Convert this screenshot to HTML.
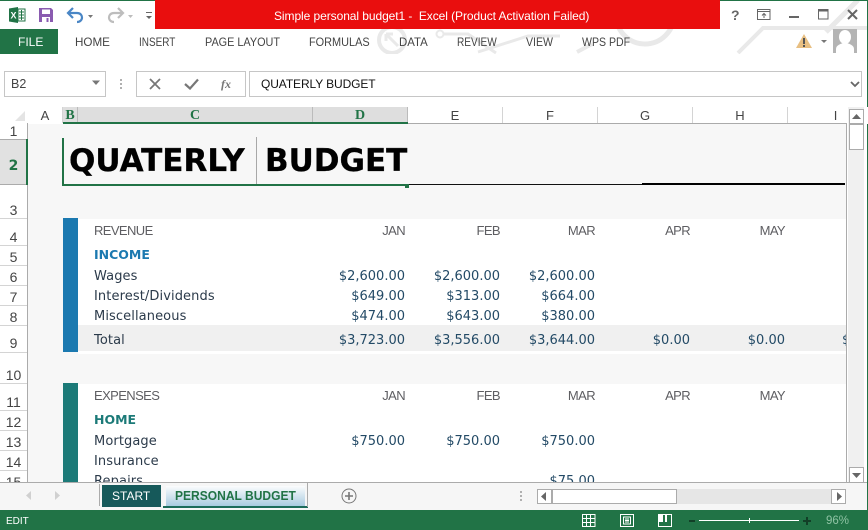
<!DOCTYPE html>
<html><head><meta charset="utf-8"><style>
html,body{margin:0;padding:0;background:#fff}
#p{position:relative;width:868px;height:530px;overflow:hidden;background:#fff;font-family:"Liberation Sans",sans-serif}
#p div{position:absolute;box-sizing:border-box}
.t{white-space:nowrap;line-height:16px;height:16px}
.rb{font-size:12px;color:#444;top:34px;transform-origin:0 50%}
.ch{top:107px;height:16px;font:13px/17px "Liberation Sans",sans-serif;color:#444;text-align:center;border-right:1px solid #d4d4d4}
.cs{font:bold 14px/17px "Liberation Serif",serif;color:#217346;border-color:#bbb}
.rn{left:0;width:27px;text-align:center;font:14px/16px "Liberation Sans",sans-serif;color:#444;height:16px}
.rl{left:0;width:27px;height:1px;background:#d4d4d4}
.h{font:13px/16px "Liberation Sans",sans-serif;letter-spacing:-.6px;color:#5e5e62;text-align:right;width:70px;height:16px;white-space:nowrap}
.l{left:94px;font:13px/16px "DejaVu Sans",sans-serif;letter-spacing:.1px;color:#2b3a4a;white-space:nowrap;height:16px}
.n{font:13px/16px "DejaVu Sans",sans-serif;color:#234a66;text-align:right;width:90px;height:16px;white-space:nowrap}
.sb{background:#fff;border:1px solid #ababab}
.ti{font:bold 31px/36px "DejaVu Sans",sans-serif;color:#000;white-space:pre;height:36px;-webkit-text-stroke:.3px #000}
</style></head><body><div id="p">

<svg style="position:absolute;left:0;top:0" width="868" height="54" viewBox="0 0 868 54" fill="none" stroke="#e9e9e9" stroke-width="4">
<circle cx="392" cy="40" r="13"/><path d="M386 34L398 46M386 34H393M386 34V41" stroke-width="3"/>
<circle cx="440" cy="34" r="3.500" stroke-width="2"/><path d="M444 34H468L496 53" stroke-width="3"/>
<path d="M478 52L528 36H560" stroke-width="3"/><circle cx="645" cy="15" r="29" stroke-width="5"/>
<path d="M577 52L592 44" stroke-width="4"/>
<path d="M738 53L763 28H868" stroke-width="4"/><path d="M826 32L858 0" stroke-width="5"/>
</svg>

<div style="left:0;top:0;width:868px;height:1px;background:#217346"></div>
<div style="left:867px;top:0;width:1px;height:510px;background:#217346"></div>

<svg style="position:absolute;left:8px;top:6px" width="18" height="18" viewBox="0 0 18 18"><path d="M1 2.500L10 1V17L1 15.500Z" fill="#217346"/><path d="M10 3H17V15H10Z" fill="#fff" stroke="#217346"/><path d="M11 6H16M11 9H16M11 12H16M13.500 4V14" stroke="#217346"/><text x="2.500" y="12.500" font-family="Liberation Sans" font-weight="bold" font-size="9" fill="#fff">X</text></svg>
<svg style="position:absolute;left:38px;top:7px" width="16" height="16" viewBox="0 0 16 16"><path d="M1 1H13L15 3V15H1Z" fill="#8a5bb0"/><rect x="4" y="2.500" width="8" height="4.500" fill="#fff"/><rect x="4" y="10" width="8" height="5" fill="#fff"/><rect x="8.500" y="11" width="2" height="4" fill="#8a5bb0"/></svg>
<svg style="position:absolute;left:66px;top:6px" width="30" height="18" viewBox="0 0 30 18" fill="none"><path d="M3 7H11C15 7 16 10 16 11.500C16 14 14 16 11 16" stroke="#4a86c5" stroke-width="2.200"/><path d="M7 2L2 7L7 12" stroke="#4a86c5" stroke-width="2.200"/><path d="M22 9H27L24.500 12Z" fill="#777"/></svg>
<svg style="position:absolute;left:106px;top:6px" width="30" height="18" viewBox="0 0 30 18" fill="none"><path d="M16 7H8C4 7 3 10 3 11.500C3 14 5 16 8 16" stroke="#bdbdbd" stroke-width="2.200"/><path d="M12 2L17 7L12 12" stroke="#bdbdbd" stroke-width="2.200"/><path d="M22 9H27L24.500 12Z" fill="#bdbdbd"/></svg>
<svg style="position:absolute;left:145px;top:11px" width="8" height="9" viewBox="0 0 8 9"><path d="M1 1.500H7" stroke="#666"/><path d="M1 5H7L4 8Z" fill="#666"/></svg>

<div style="left:155px;top:0;width:565px;height:29px;background:#e90e0e"></div>
<div class="t" style="left:274px;top:8px;color:#fff;font-size:12px;letter-spacing:-.07px;white-space:pre">Simple personal budget1 -  Excel (Product Activation Failed)</div>

<div class="t" style="left:731px;top:7px;color:#666;font:bold 14px/16px 'Liberation Sans',sans-serif">?</div>
<svg style="position:absolute;left:757px;top:9px" width="14" height="12" viewBox="0 0 14 12" fill="none" stroke="#666"><rect x=".5" y=".5" width="12.500" height="10"/><path d="M.5 2.500H13"/><path d="M7 9V4.500M5 6.500L7 4.500L9 6.500"/></svg>
<div style="left:789px;top:16px;width:10px;height:2px;background:#666"></div>
<svg style="position:absolute;left:818px;top:9px" width="11" height="11" viewBox="0 0 11 11" fill="none" stroke="#666"><rect x=".5" y=".5" width="9.500" height="9.500"/><path d="M.5 1.500H10" stroke-width="2"/></svg>
<svg style="position:absolute;left:847px;top:9px" width="11" height="11" viewBox="0 0 11 11" fill="none" stroke="#666" stroke-width="2"><path d="M1 1L10 10M10 1L1 10"/></svg>

<div style="left:0;top:29px;width:58px;height:25px;background:#217346"></div>
<div class="t" style="left:18px;top:34px;color:#fff;font-size:12px">FILE</div>
<div class="t rb" style="left:75px;transform:scaleX(.97)">HOME</div>
<div class="t rb" style="left:139px;transform:scaleX(.83)">INSERT</div>
<div class="t rb" style="left:205px;transform:scaleX(.905)">PAGE LAYOUT</div>
<div class="t rb" style="left:309px;transform:scaleX(.91)">FORMULAS</div>
<div class="t rb" style="left:399px;transform:scaleX(.95)">DATA</div>
<div class="t rb" style="left:457px;transform:scaleX(.84)">REVIEW</div>
<div class="t rb" style="left:526px;transform:scaleX(.88)">VIEW</div>
<div class="t rb" style="left:582px;transform:scaleX(.88)">WPS PDF</div>

<svg style="position:absolute;left:796px;top:34px" width="20" height="15" viewBox="0 0 20 15"><path d="M8 0L16 14H0Z" fill="#e8bf82"/><rect x="7" y="4" width="2" height="6" fill="#555"/><rect x="7" y="11" width="2" height="2" fill="#555"/></svg>
<svg style="position:absolute;left:820px;top:39px" width="8" height="5"><path d="M1 1H7L4 4Z" fill="#777"/></svg>
<svg style="position:absolute;left:833px;top:29px" width="24" height="24" viewBox="0 0 24 24"><rect width="24" height="24" fill="#b4b4b4"/><ellipse cx="12" cy="8" rx="6" ry="7" fill="#fff"/><path d="M3 24V20C3 16 8 15 10 14H14C16 15 21 16 21 20V24Z" fill="#fff"/></svg>

<div style="left:4px;top:71px;width:102px;height:26px;border:1px solid #c6c6c6;background:#fff"></div>
<div class="t" style="left:11px;top:76px;font-size:12.500px;color:#444">B2</div>
<svg style="position:absolute;left:91px;top:80px" width="10" height="6"><path d="M1 .5H9L5 5Z" fill="#777"/></svg>
<div style="left:120px;top:79px;width:2px;height:2px;background:#b0b0b0"></div>
<div style="left:120px;top:83px;width:2px;height:2px;background:#b0b0b0"></div>
<div style="left:120px;top:87px;width:2px;height:2px;background:#b0b0b0"></div>
<div style="left:136px;top:71px;width:110px;height:26px;border:1px solid #c6c6c6;background:#fff"></div>
<svg style="position:absolute;left:149px;top:78px" width="12" height="12" fill="none" stroke="#777" stroke-width="1.800"><path d="M1 1L11 11M11 1L1 11"/></svg>
<svg style="position:absolute;left:184px;top:78px" width="15" height="12" fill="none" stroke="#777" stroke-width="2.200"><path d="M1 6L6 10.500L14 1.500"/></svg>
<div class="t" style="left:221px;top:76px;font:italic bold 12px/16px 'Liberation Serif',serif;color:#777">fx</div>
<div style="left:249px;top:71px;width:613px;height:26px;border:1px solid #c6c6c6;background:#fff"></div>
<div class="t" style="left:261px;top:76px;font-size:12px;color:#111;letter-spacing:-.1px">QUATERLY BUDGET</div>
<svg style="position:absolute;left:850px;top:81px" width="10" height="7" fill="none" stroke="#666" stroke-width="1.800"><path d="M1 1L5 5L9 1"/></svg>

<div style="left:0;top:107px;width:868px;height:17px;background:#fff"></div>
<svg style="position:absolute;left:15px;top:111px" width="10" height="10"><path d="M10 0V10H0Z" fill="#e4e4e4"/></svg>
<div class="ch" style="left:28px;width:35px">A</div>
<div style="left:63px;top:107px;width:345px;height:16px;background:#dedede"></div>
<div class="ch cs" style="left:63px;width:15px">B</div>
<div class="ch cs" style="left:78px;width:235px">C</div>
<div class="ch cs" style="left:313px;width:95px">D</div>
<div class="ch" style="left:408px;width:95px">E</div>
<div class="ch" style="left:503px;width:95px">F</div>
<div class="ch" style="left:598px;width:95px">G</div>
<div class="ch" style="left:693px;width:95px">H</div>
<div class="ch" style="left:788px;width:58px;border:0;padding-left:37px">I</div>
<div style="left:63px;top:122px;width:345px;height:2px;background:#217346"></div>
<div style="left:408px;top:123px;width:438px;height:1px;background:#ababab"></div>

<div style="left:27px;top:123px;width:1px;height:360px;background:#ababab"></div>
<div style="left:28px;top:124px;width:818px;height:359px;background:#f7f7f7"></div>
<div style="left:846px;top:123px;width:1px;height:360px;background:#ababab"></div>

<div style="left:0;top:139px;width:27px;height:46px;background:#e1e1e1;border-top:1px solid #ababab;border-bottom:1px solid #ababab"></div>
<div style="left:26px;top:139px;width:2px;height:46px;background:#217346"></div>

<div class="rn" style="top:123px">1</div>
<div class="rn" style="top:158px;color:#217346;font:bold 14px/16px 'DejaVu Sans',sans-serif">2</div>
<div class="rn" style="top:202px">3</div>
<div class="rn" style="top:229px">4</div>
<div class="rn" style="top:249px">5</div>
<div class="rn" style="top:269px">6</div>
<div class="rn" style="top:289px">7</div>
<div class="rn" style="top:309px">8</div>
<div class="rn" style="top:335px">9</div>
<div class="rn" style="top:367px">10</div>
<div class="rn" style="top:394px">11</div>
<div class="rn" style="top:414px">12</div>
<div class="rn" style="top:434px">13</div>
<div class="rn" style="top:454px">14</div>
<div class="rn" style="top:474px;height:8px;overflow:hidden">15</div>
<div class="rl" style="top:218px"></div><div class="rl" style="top:245px"></div><div class="rl" style="top:265px"></div><div class="rl" style="top:285px"></div><div class="rl" style="top:305px"></div><div class="rl" style="top:325px"></div><div class="rl" style="top:352px"></div><div class="rl" style="top:383px"></div><div class="rl" style="top:410px"></div><div class="rl" style="top:430px"></div><div class="rl" style="top:450px"></div><div class="rl" style="top:470px"></div>

<div style="left:78px;top:219px;width:768px;height:135px;background:#fff"></div>
<div style="left:78px;top:325px;width:768px;height:26px;background:#f0f0f0"></div>
<div style="left:78px;top:384px;width:768px;height:99px;background:#fff"></div>
<div style="left:63px;top:218px;width:15px;height:134px;background:#1b79b0"></div>
<div style="left:63px;top:383px;width:15px;height:100px;background:#1c7a78"></div>

<div style="left:62px;top:138px;width:2px;height:48px;background:#217346"></div>
<div style="left:62px;top:184px;width:345px;height:2px;background:#217346"></div>
<div style="left:256px;top:137px;width:1px;height:47px;background:#a8a8a8"></div>
<div style="left:405px;top:184px;width:4px;height:4px;background:#217346"></div>
<div style="left:409px;top:184px;width:233px;height:1px;background:#111"></div>
<div style="left:642px;top:183px;width:203px;height:2px;background:#000"></div>
<div class="ti" style="left:69px;top:143px">QUATERLY</div>
<div class="ti" style="left:265px;top:143px">BUDGET</div>

<div class="h" style="left:94px;top:223px;text-align:left">REVENUE</div>
<div class="h" style="left:335px;top:223px">JAN</div><div class="h" style="left:430px;top:223px">FEB</div><div class="h" style="left:525px;top:223px">MAR</div><div class="h" style="left:620px;top:223px">APR</div><div class="h" style="left:715px;top:223px">MAY</div>
<div class="l" style="top:247px;font-weight:bold;font-size:12.500px;letter-spacing:0;color:#1b79b0">INCOME</div>
<div class="l" style="top:269px">Wages</div>
<div class="l" style="top:289px">Interest/Dividends</div>
<div class="l" style="top:309px">Miscellaneous</div>
<div class="l" style="top:333px">Total</div>
<div class="n" style="left:315px;top:269px">$2,600.00</div><div class="n" style="left:410px;top:269px">$2,600.00</div><div class="n" style="left:505px;top:269px">$2,600.00</div>
<div class="n" style="left:315px;top:289px">$649.00</div><div class="n" style="left:410px;top:289px">$313.00</div><div class="n" style="left:505px;top:289px">$664.00</div>
<div class="n" style="left:315px;top:309px">$474.00</div><div class="n" style="left:410px;top:309px">$643.00</div><div class="n" style="left:505px;top:309px">$380.00</div>
<div class="n" style="left:315px;top:333px">$3,723.00</div><div class="n" style="left:410px;top:333px">$3,556.00</div><div class="n" style="left:505px;top:333px">$3,644.00</div><div class="n" style="left:600px;top:333px">$0.00</div><div class="n" style="left:695px;top:333px">$0.00</div>
<div style="left:842px;top:333px;width:4px;height:16px;overflow:hidden;font:13px/16px 'DejaVu Sans',sans-serif;color:#234a66">$</div>

<div class="h" style="left:94px;top:388px;text-align:left">EXPENSES</div>
<div class="h" style="left:335px;top:388px">JAN</div><div class="h" style="left:430px;top:388px">FEB</div><div class="h" style="left:525px;top:388px">MAR</div><div class="h" style="left:620px;top:388px">APR</div><div class="h" style="left:715px;top:388px">MAY</div>
<div class="l" style="top:412px;font-weight:bold;font-size:12.500px;letter-spacing:0;color:#1c7a78">HOME</div>
<div class="l" style="top:434px">Mortgage</div>
<div class="l" style="top:454px">Insurance</div>
<div class="l" style="top:474px;height:9px;overflow:hidden">Repairs</div>
<div class="n" style="left:315px;top:434px">$750.00</div><div class="n" style="left:410px;top:434px">$750.00</div><div class="n" style="left:505px;top:434px">$750.00</div>
<div class="n" style="left:505px;top:474px;height:9px;overflow:hidden">$75.00</div>

<div style="left:848px;top:107px;width:16px;height:376px;background:#f0f0f0"></div>
<div class="sb" style="left:849px;top:109px;width:15px;height:15px"></div>
<svg style="position:absolute;left:852px;top:114px" width="9" height="5"><path d="M0 5H9L4.500 0Z" fill="#666"/></svg>
<div class="sb" style="left:849px;top:124px;width:15px;height:26px"></div>
<div class="sb" style="left:849px;top:467px;width:15px;height:16px"></div>
<svg style="position:absolute;left:852px;top:473px" width="9" height="5"><path d="M0 0H9L4.500 5Z" fill="#666"/></svg>

<div style="left:0;top:483px;width:867px;height:27px;background:#f6f6f6"></div>
<div style="left:0;top:482px;width:867px;height:1px;background:#ababab"></div>
<svg style="position:absolute;left:25px;top:491px" width="36" height="10"><path d="M6 0V9L1 4.500Z" fill="#d0d0d0"/><path d="M30 0V9L35 4.500Z" fill="#d0d0d0"/></svg>
<div style="left:99px;top:484px;width:1px;height:22px;background:#ababab"></div>
<div style="left:102px;top:485px;width:59px;height:22px;background:#16595a"></div>
<div class="t" style="left:112px;top:488px;color:#fff;font-size:12px">START</div>
<div style="left:166px;top:486px;width:139px;height:20px;background:linear-gradient(#fbfcfd,#a9cbe0)"></div>
<div style="left:163px;top:506px;width:145px;height:2px;background:#1c6b5a"></div>
<div style="left:307px;top:483px;width:1px;height:24px;background:#ababab"></div>
<div class="t" style="left:175px;top:488px;color:#217346;font:bold 13px/16px 'Liberation Sans',sans-serif;transform:scaleX(.926);transform-origin:0 50%">PERSONAL BUDGET</div>
<svg style="position:absolute;left:341px;top:488px" width="16" height="16" fill="none" stroke="#777"><circle cx="8" cy="8" r="7"/><path d="M4 8H12M8 4V12" stroke-width="1.600"/></svg>
<div style="left:520px;top:491px;width:2px;height:2px;background:#b0b0b0"></div><div style="left:520px;top:495px;width:2px;height:2px;background:#b0b0b0"></div><div style="left:520px;top:499px;width:2px;height:2px;background:#b0b0b0"></div>
<div style="left:552px;top:489px;width:279px;height:15px;background:#e6e6e6"></div>
<div class="sb" style="left:537px;top:489px;width:15px;height:15px"></div>
<svg style="position:absolute;left:541px;top:492px" width="6" height="9"><path d="M5 0V9L0 4.500Z" fill="#666"/></svg>
<div class="sb" style="left:552px;top:489px;width:125px;height:15px"></div>
<div class="sb" style="left:831px;top:489px;width:15px;height:15px"></div>
<svg style="position:absolute;left:837px;top:492px" width="6" height="9"><path d="M0 0V9L5 4.500Z" fill="#666"/></svg>

<div style="left:0;top:510px;width:868px;height:20px;background:#217346"></div>
<div class="t" style="left:6px;top:514px;color:#fff;font-size:10px">EDIT</div>
<svg style="position:absolute;left:582px;top:514px" width="14" height="13" fill="none" stroke="#fff"><path d="M.5 .5H13V12.500H.5ZM.5 4.500H13M.5 8.500H13M4.500 .5V12.500M8.500 .5V12.500"/></svg>
<svg style="position:absolute;left:620px;top:514px" width="14" height="13" fill="none" stroke="#fff"><rect x=".5" y=".5" width="13" height="12"/><rect x="3.500" y="3" width="7" height="7"/><path d="M5 5H9M5 6.500H9M5 8H9"/></svg>
<svg style="position:absolute;left:658px;top:514px" width="14" height="13" fill="none"><rect x=".5" y=".5" width="13" height="12" stroke="#fff"/><path d="M0 0H5V8H0ZM7 0H9V8H7Z" fill="#fff"/></svg>
<div style="left:689px;top:520px;width:6px;height:2px;background:#123f27"></div>
<div style="left:699px;top:520px;width:100px;height:1px;background:#fff"></div>
<div style="left:749px;top:518px;width:1px;height:5px;background:#fff"></div>
<div style="left:803px;top:520px;width:8px;height:2px;background:#123f27"></div>
<div style="left:806px;top:517px;width:2px;height:8px;background:#123f27"></div>
<div class="t" style="left:826px;top:513px;color:#8fc3a4;font-size:11.500px">96%</div>

</div></body></html>
